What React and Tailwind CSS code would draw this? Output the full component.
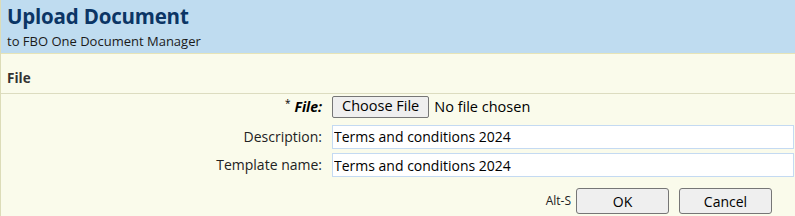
import React from 'react';

const font = { fontFamily: '"Open Sans", "Noto Sans", sans-serif' };

const Row = ({ label, children }) => (
    <div className="flex items-center">
        <div className="w-[323px] pr-[2px] text-right text-[14px] text-[#222]">{label}</div>
        <div className="flex-1 pl-[8px]">{children}</div>
    </div>
);

const App = () => {
    return (
        <div className="w-[795px] h-[216px] bg-[#fafbeb] border-l border-[#dcdcb8] overflow-hidden" style={font}>
            {/* Header */}
            <div className="h-[54px] bg-[#bfdcf0] border-b border-[#e6e4b8] px-[6px] pt-[3px]">
                <h1 className="text-[20.5px] leading-[27px] font-bold text-[#0b3565] tracking-[-0.2px]">Upload Document</h1>
                <p className="text-[13px] leading-[18px] mt-[2px] text-[#1a1a1a]">to FBO One Document Manager</p>
            </div>

            {/* Section title */}
            <div className="h-[40px] border-b border-[#dcdcc0] px-[6px] flex items-center pt-[10px]">
                <span className="text-[13.5px] font-bold text-[#333]">File</span>
            </div>

            {/* Fields */}
            <div className="pt-[1px] flex flex-col">
                <Row label={
                    <span className="font-bold italic text-black">
                        <sup className="text-[10px] not-italic font-normal mr-[4px]">*</sup>File:
                    </span>
                }>
                    <div className="flex items-center h-[23px]">
                        <button className="h-[22px] px-[9px] bg-[#efefef] border border-[#767676] rounded-[2px] text-[14.5px] text-black leading-none">Choose File</button>
                        <span className="ml-[5px] text-[14.5px] text-black">No file chosen</span>
                    </div>
                </Row>
                <div className="h-[6px]" />
                <Row label="Description:">
                    <input
                        readOnly
                        value="Terms and conditions 2024"
                        className="w-[462px] h-[24px] bg-white border border-[#c4daf2] px-[1px] text-[14px] text-black outline-none"
                    />
                </Row>
                <div className="h-[4px]" />
                <Row label="Template name:">
                    <input
                        readOnly
                        value="Terms and conditions 2024"
                        className="w-[462px] h-[24px] bg-white border border-[#c4daf2] px-[1px] text-[14px] text-black outline-none"
                    />
                </Row>
            </div>

            {/* Actions */}
            <div className="flex items-center justify-end mt-[11px] pr-[23px]">
                <span className="text-[12px] text-[#222] mr-[5px]">Alt-S</span>
                <button className="w-[93px] h-[26px] bg-[#efefef] border border-[#767676] rounded-[3px] text-[14px] text-black">OK</button>
                <button className="ml-[10px] w-[93px] h-[26px] bg-[#efefef] border border-[#767676] rounded-[3px] text-[14px] text-black">Cancel</button>
            </div>
        </div>
    );
};

export default App;
